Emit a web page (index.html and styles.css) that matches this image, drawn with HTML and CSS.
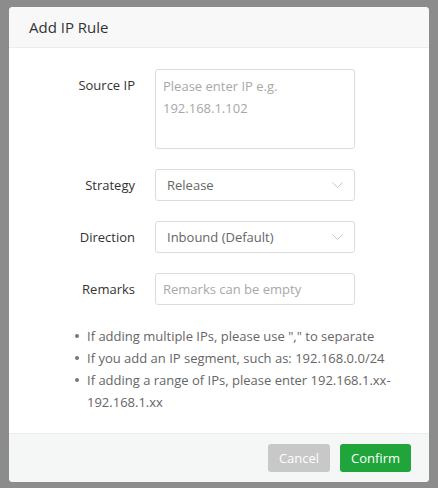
FILE: index.html
```html
<!DOCTYPE html>
<html>
<head>
<meta charset="utf-8">
<link rel="stylesheet" href="styles.css">
</head>
<body>
<div class="dialog">
  <div class="header">Add IP Rule</div>
  <div class="body">
    <div class="row row-tall">
      <div class="label">Source IP</div>
      <div class="field textarea"><span class="ph">Please enter IP e.g.<br>192.168.1.102</span></div>
    </div>
    <div class="row">
      <div class="label">Strategy</div>
      <div class="field select"><span class="val">Release</span>
        <svg class="arrow" width="11" height="6" viewBox="0 0 11 6"><path d="M0.5 0.5 L5.5 5.5 L10.5 0.5" fill="none" stroke="#c6c6c6" stroke-width="1"/></svg>
      </div>
    </div>
    <div class="row">
      <div class="label">Direction</div>
      <div class="field select"><span class="val">Inbound (Default)</span>
        <svg class="arrow" width="11" height="6" viewBox="0 0 11 6"><path d="M0.5 0.5 L5.5 5.5 L10.5 0.5" fill="none" stroke="#c6c6c6" stroke-width="1"/></svg>
      </div>
    </div>
    <div class="row">
      <div class="label">Remarks</div>
      <div class="field"><span class="ph">Remarks can be empty</span></div>
    </div>
    <ul class="tips">
      <li>If adding multiple IPs, please use "," to separate</li>
      <li>If you add an IP segment, such as: 192.168.0.0/24</li>
      <li>If adding a range of IPs, please enter 192.168.1.xx-<br>192.168.1.xx</li>
    </ul>
  </div>
  <div class="footer">
    <button class="btn cancel">Cancel</button>
    <button class="btn confirm">Confirm</button>
  </div>
</div>
</body>
</html>
```

FILE: styles.css
```css
html, body { margin: 0; padding: 0; }
body {
  background: #8c8c8c;
  font-family: "Open Sans", "Noto Sans", sans-serif;
  font-size: 13px;
  width: 438px;
  height: 488px;
  overflow: hidden;
}
.dialog {
  margin: 7px 0 0 9px;
  width: 420px;
  height: 475px;
  background: #fff;
  border-radius: 4px;
  display: flex;
  flex-direction: column;
  overflow: hidden;
}
.header {
  height: 41px;
  box-sizing: border-box;
  background: #f8f8f8;
  border-bottom: 1px solid #ececec;
  padding-left: 20px;
  font-size: 15px;
  color: #333;
  display: flex;
  align-items: center;
}
.body {
  flex: 1;
  padding-top: 21px;
}
.row {
  display: flex;
  align-items: center;
  height: 32px;
  margin-bottom: 20px;
}
.row-tall {
  height: 80px;
  align-items: flex-start;
  margin-bottom: 20px;
}
.row-tall .label { line-height: 32px; }
.label {
  width: 126px;
  text-align: right;
  color: #333;
  padding-right: 20px;
}
.field {
  box-sizing: border-box;
  width: 200px;
  height: 32px;
  border: 1px solid #dcdcdc;
  border-radius: 3px;
  padding: 0 10px 0 7px;
  display: flex;
  align-items: center;
  color: #666;
}
.textarea {
  height: 80px;
  align-items: flex-start;
  padding-top: 5px;
  line-height: 22px;
}
.ph { color: #a8a8a8; }
.select { justify-content: space-between; padding-left: 11px; }
.val { color: #666; }
.arrow { display: block; margin-right: 1px; }
.tips {
  margin: 0;
  padding: 0 0 0 78px;
  width: 320px;
  color: #666;
  line-height: 22px;
  list-style: none;
}
.tips li { position: relative; padding-left: 0; }
.tips li::before {
  content: "";
  position: absolute;
  left: -12px;
  top: 9px;
  width: 4px;
  height: 4px;
  border-radius: 50%;
  background: #777;
}
.footer {
  height: 49px;
  box-sizing: border-box;
  background: #f5f7f7;
  border-top: 1px solid #ececec;
  display: flex;
  justify-content: flex-end;
  align-items: flex-start;
  padding: 10px 18px 0 0;
  gap: 10px;
}
.btn {
  font-family: inherit;
  font-size: 13px;
  height: 28px;
  border: none;
  border-radius: 3px;
  color: #fff;
  padding: 0;
}
.cancel { width: 62px; background: #c8c8c8; }
.confirm { width: 71px; background: #20a53a; }
```
